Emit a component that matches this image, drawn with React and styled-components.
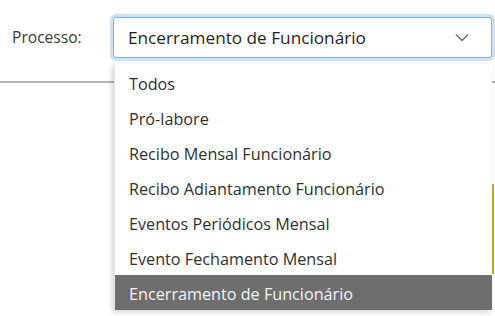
import React, { useState } from 'react';
import styled, { createGlobalStyle } from 'styled-components';

const GlobalStyle = createGlobalStyle`
  html, body {
    margin: 0;
    padding: 0;
    background: #ffffff;
  }
  body {
    font-family: "Open Sans", "Noto Sans", sans-serif;
    color: #333333;
  }
`;

const Page = styled.div`
  position: relative;
  width: 495px;
  height: 316px;
  overflow: hidden;
  background: #ffffff;
`;

const FilterRow = styled.div`
  display: flex;
  align-items: center;
  height: 58px;
  padding: 16px 3px 0 12px;
  box-sizing: border-box;
`;

const Label = styled.label`
  width: 101px;
  font-size: 15.6px;
  color: #3a3a3a;
`;

const SelectBox = styled.div`
  flex: 1;
  height: 41px;
  box-sizing: border-box;
  display: flex;
  align-items: center;
  justify-content: space-between;
  padding: 0 22px 0 14px;
  border: 1px solid #7fb0e0;
  border-radius: 3px;
  box-shadow: 0 0 0 3px #cfe1f4;
  font-size: 17.2px;
  color: #1f1f1f;
  background: #ffffff;
`;

const Divider = styled.div`
  margin-top: 23px;
  height: 2px;
  background: #b4b4b4;
`;

const Accent = styled.div`
  position: absolute;
  left: 492px;
  top: 184px;
  width: 2px;
  height: 90px;
  background: #c9a61c;
`;

const Menu = styled.ul`
  position: absolute;
  left: 114px;
  top: 64px;
  width: 377px;
  margin: 0;
  padding: 1px 0 0;
  list-style: none;
  background: #ffffff;
  box-shadow: -2px 2px 6px rgba(0, 0, 0, 0.18);
  border-left: 1px solid #e6e6e6;
`;

const Option = styled.li`
  height: 35px;
  box-sizing: border-box;
  display: flex;
  align-items: center;
  padding: 2px 0 0 14px;
  font-size: 16.2px;
  color: ${(p) => (p.active ? '#f4f4f4' : '#2f2f2f')};
  background: ${(p) => (p.active ? '#6e6e6e' : 'transparent')};
`;

const Chevron = () => (
  <svg width="14" height="9" viewBox="0 0 14 9" fill="none">
    <path d="M1 1.5 L7 7.5 L13 1.5" stroke="#6b6b6b" strokeWidth="1.4" />
  </svg>
);

const options = [
  'Todos',
  'Pró-labore',
  'Recibo Mensal Funcionário',
  'Recibo Adiantamento Funcionário',
  'Eventos Periódicos Mensal',
  'Evento Fechamento Mensal',
  'Encerramento de Funcionário',
];

export default function App() {
  const [selected, setSelected] = useState('Encerramento de Funcionário');

  return (
    <Page>
      <GlobalStyle />
      <FilterRow>
        <Label>Processo:</Label>
        <SelectBox>
          <span>{selected}</span>
          <Chevron />
        </SelectBox>
      </FilterRow>
      <Divider />
      <Accent />
      <Menu>
        {options.map((o) => (
          <Option key={o} active={o === selected} onClick={() => setSelected(o)}>
            {o}
          </Option>
        ))}
      </Menu>
    </Page>
  );
}
